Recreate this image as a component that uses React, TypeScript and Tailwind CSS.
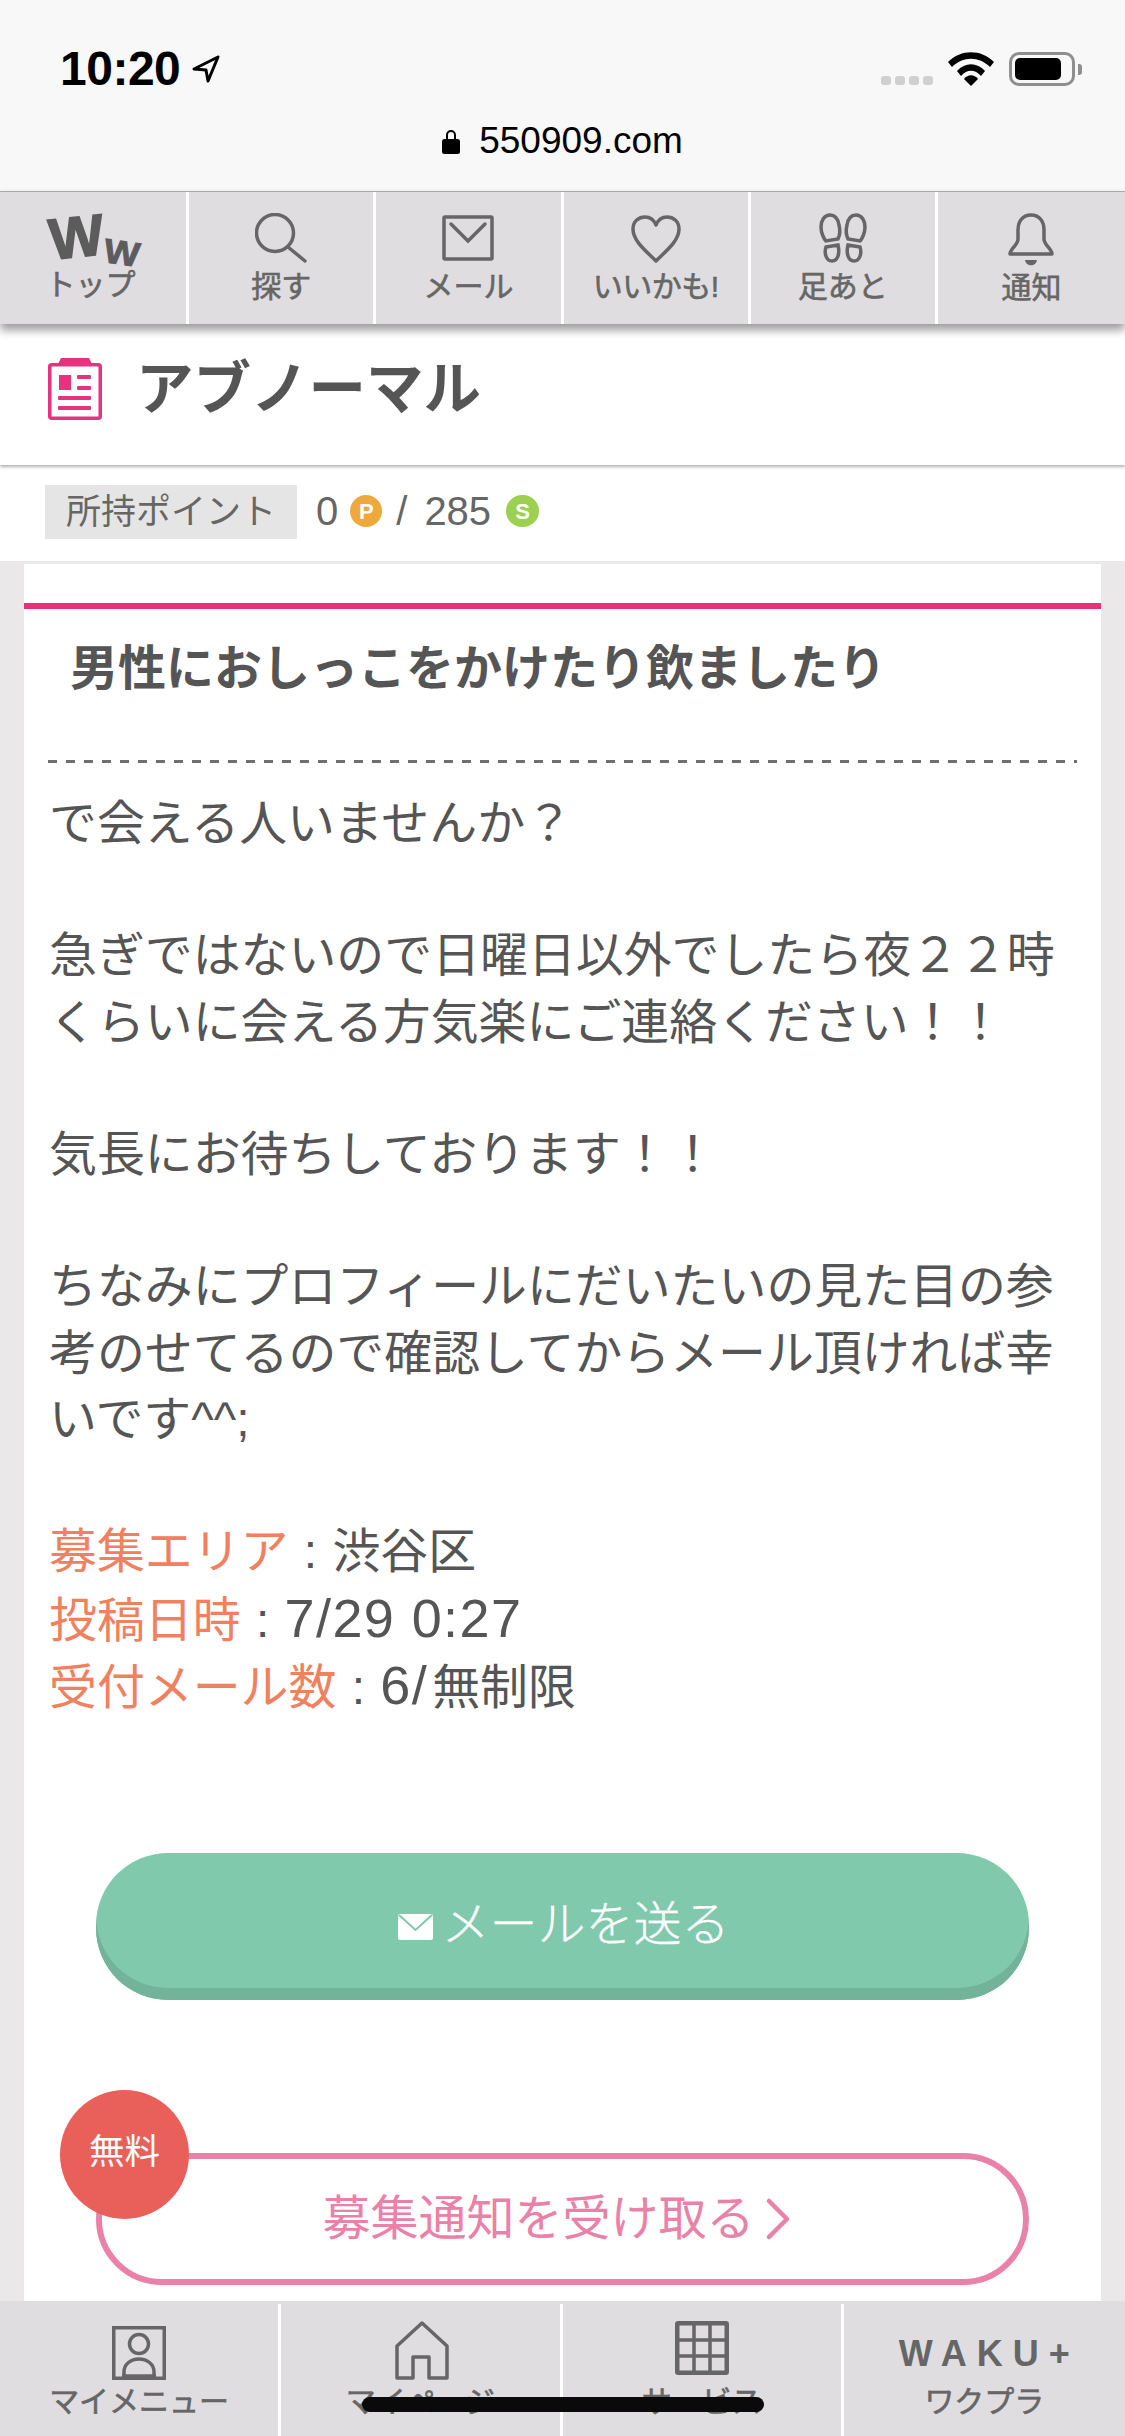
import React from "react";

const NavItem: React.FC<{ label: string; children: React.ReactNode; labelClass?: string }> = ({ label, children, labelClass }) => {
  return (
    <div className="flex flex-col items-center border-r-[3px] border-white last:border-r-0 pt-[21px]">
      <div className="h-[56px] flex items-start justify-center">{children}</div>
      <span className={`h-[36px] leading-[36px] text-[30px] [-webkit-text-stroke:0.6px_#666] text-[#666] whitespace-nowrap ${labelClass ?? ""}`}>{label}</span>
    </div>
  );
};

const BottomItem: React.FC<{ label: string; children: React.ReactNode; labelClass?: string }> = ({ label, children, labelClass }) => {
  return (
    <div className="flex flex-col items-center border-r-[3px] border-white last:border-r-0 pt-[17px]">
      <div className="h-[59px] flex items-start justify-center">{children}</div>
      <span className={`mt-[4px] h-[36px] leading-[36px] text-[30px] [-webkit-text-stroke:0.6px_#666] text-[#666] whitespace-nowrap ${labelClass ?? ""}`}>{label}</span>
    </div>
  );
};

const Sep: React.FC = () => <span className="inline-block w-[44px] text-center text-[#555]">:</span>;

const App: React.FC = () => {
  return (
    <div lang="ja" className="relative h-[2436px] w-[1125px] overflow-hidden flex flex-col bg-white font-['Liberation_Sans','Noto_Sans_CJK_JP',sans-serif] text-[#555]">
      {/* status bar + url */}
      <div className="h-[191px] shrink-0 bg-[#f8f8f8] flex flex-col text-black">
        <div className="flex justify-between items-start pl-[60px] pr-[43px] pt-[52px] h-[120px]">
          <div className="flex items-center gap-[11px] h-[34px]">
            <span className="text-[48px] leading-[34px] font-bold tracking-[-0.5px]">10:20</span>
            <svg width="30" height="30" viewBox="0 0 30 30" fill="none" stroke="#000" strokeWidth="3" strokeLinejoin="round">
              <path d="M27 3 L3 15 L15 16 L17 27 Z" />
            </svg>
          </div>
          <div className="flex items-center h-[34px]">
            <div className="flex gap-[4px] items-end self-end mb-[1px]">
              <span className="w-[10px] h-[9px] rounded-[3px] bg-[#d0d0d0]" />
              <span className="w-[10px] h-[9px] rounded-[3px] bg-[#d0d0d0]" />
              <span className="w-[10px] h-[9px] rounded-[3px] bg-[#d0d0d0]" />
              <span className="w-[10px] h-[9px] rounded-[3px] bg-[#d0d0d0]" />
            </div>
            <svg className="ml-[15px]" width="46" height="34" viewBox="0 0 46 34" fill="#000">
              <path d="M0 10 C13 -3 33 -3 46 10 L42 15 C31 4 15 4 4 15 Z" />
              <path d="M9 19 C17 10 29 10 37 19 L33 24 C27 17 19 17 13 24 Z" />
              <path d="M16 27 C20 22 26 22 30 27 L23 34 Z" />
            </svg>
            <div className="ml-[15px] w-[66px] h-[34px] rounded-[10px] border-[3px] border-[#8f8f8f] p-[3px]">
              <div className="w-[46px] h-[22px] rounded-[5px] bg-black" />
            </div>
            <div className="ml-[3px] w-[4px] h-[11px] rounded-r-[3px] bg-[#8f8f8f]" />
          </div>
        </div>
        <div className="flex items-center justify-center gap-[19px] mt-[-1px]">
          <svg width="18" height="26" viewBox="0 0 18 26" fill="#000">
            <path d="M4 11 V7 a5 5 0 0 1 10 0 V11 H12 V7 a3 3 0 0 0 -6 0 V11 Z" />
            <rect x="0" y="11" width="18" height="15" rx="2.5" />
          </svg>
          <span className="text-[37px] leading-[44px]">550909.com</span>
        </div>
      </div>

      {/* top nav */}
      <div className="relative z-10 shrink-0 h-[133px] grid grid-cols-6 pl-[2px] bg-[#dfdde0] border-t border-[#a9a7ab] shadow-[0_6px_9px_rgba(0,0,0,0.4)]">
        <NavItem label="トップ" labelClass="-mt-[2px] mr-[7px]">
          <div className="flex items-start h-[53px] text-[#5c5c5c] font-bold">
            <span className="text-[58px] leading-[44px] mt-[2px] -rotate-6 [-webkit-text-stroke:1.5px_#5c5c5c]">W</span>
            <span className="text-[38px] leading-[24px] mt-[28px] rotate-[8deg] scale-y-90 [-webkit-text-stroke:1px_#5c5c5c]">W</span>
          </div>
        </NavItem>
        <NavItem label="探す">
          <svg width="52" height="50" viewBox="0 0 52 50" fill="none" stroke="#666" strokeWidth="3.5" strokeLinecap="round">
            <circle cx="20" cy="20" r="18.5" />
            <path d="M33 34 L50 48" />
          </svg>
        </NavItem>
        <NavItem label="メール">
          <svg className="mt-[2px]" width="52" height="46" viewBox="0 0 52 46" fill="none" stroke="#666" strokeWidth="3.5">
            <rect x="2" y="2" width="48" height="42" rx="1" />
            <path d="M9 9 L26 26 L43 9" strokeLinecap="round" />
          </svg>
        </NavItem>
        <NavItem label="いいかも!" labelClass="tracking-[-0.5px]">
          <svg className="mt-[2px]" width="50" height="48" viewBox="0 0 50 48" fill="none" stroke="#666" strokeWidth="3.5" strokeLinejoin="round">
            <path d="M25 46 C15 36 2 26 2 14 C2 6 8 2 14 2 C19 2 23 5 25 10 C27 5 31 2 36 2 C42 2 48 6 48 14 C48 26 35 36 25 46 Z" />
          </svg>
        </NavItem>
        <NavItem label="足あと">
          <svg width="48" height="50" viewBox="0 0 48 50" fill="none" stroke="#666" strokeWidth="3.5">
            <path d="M11 2 C5 2 2 8 2 14 C2 20 5 26 7 28 L19 26 C21 22 21 16 20 12 C19 6 16 2 11 2 Z" />
            <path d="M37 2 C43 2 46 8 46 14 C46 20 43 26 41 28 L29 26 C27 22 27 16 28 12 C29 6 32 2 37 2 Z" />
            <path d="M7 34 L19 32 C21 40 19 48 13 48 C7 48 5 40 7 34 Z" />
            <path d="M41 34 L29 32 C27 40 29 48 35 48 C41 48 43 40 41 34 Z" />
          </svg>
        </NavItem>
        <NavItem label="通知" labelClass="mt-[1px]">
          <svg width="46" height="54" viewBox="0 0 46 54" fill="none" stroke="#666" strokeWidth="3.5" strokeLinejoin="round">
            <path d="M23 2 C14 2 10 9 10 17 V26 C10 32 2 36 2 41 H44 C44 36 36 32 36 26 V17 C36 9 32 2 23 2 Z" />
            <path d="M17 47 H29 C28 54 18 54 17 47 Z" fill="#666" stroke="none" />
          </svg>
        </NavItem>
      </div>

      {/* category header */}
      <div className="relative z-[5] shrink-0 h-[141px] flex items-start gap-[34px] pl-[48px] pt-[34px] bg-white shadow-[0_2px_3px_rgba(0,0,0,0.3)]">
        <svg width="54" height="62" viewBox="0 0 54 62" fill="#e8327f">
          <path d="M10 6 L13 0 H41 L44 6 Z" />
          <rect x="1.75" y="6.75" width="50.5" height="53.5" rx="2" fill="none" stroke="#e8327f" strokeWidth="3.5" />
          <rect x="11" y="17" width="12" height="15" />
          <rect x="29" y="17" width="14" height="4" rx="1" />
          <rect x="29" y="28" width="14" height="4" rx="1" />
          <rect x="10" y="38" width="33" height="4" rx="1" />
          <rect x="10" y="48" width="33" height="4" rx="1" />
        </svg>
        <h1 className="text-[57.5px] leading-[56px] font-bold text-[#555] mt-[3px]">アブノーマル</h1>
      </div>

      {/* points */}
      <div className="shrink-0 h-[96px] flex items-start pl-[45px] pt-[20px] bg-white text-[#666]">
        <div className="w-[252px] h-[54px] bg-[#e5e5e5] flex items-center justify-center text-[35px]">所持ポイント</div>
        <div className="flex items-center h-[54px] ml-[19px] mt-[-1px] text-[40px]">
          <span>0</span>
          <span className="ml-[12px] w-[32px] h-[32px] rounded-full bg-[#efa83c] text-white text-[22px] font-bold flex items-center justify-center">P</span>
          <span className="ml-[14px]">/</span>
          <span className="ml-[17px]">285</span>
          <span className="ml-[15px] w-[33px] h-[32px] rounded-full bg-[#9bd050] text-white text-[22px] font-bold flex items-center justify-center">S</span>
        </div>
      </div>

      {/* content */}
      <div className="flex-1 min-h-0 overflow-hidden bg-[#eae8e9] pt-[3px] px-[24px]">
        <div className="bg-white pt-[39px] h-full">
          <div className="h-[6px] bg-[#e63279]" />
          <h2 className="mt-[27px] ml-[46px] text-[48px] leading-[66px] font-bold text-[#555] whitespace-nowrap">男性におしっこをかけたり飲ましたり</h2>
          <div className="mt-[58px] mx-[24px] h-[3px] bg-[repeating-linear-gradient(90deg,#6e6e73_0_9px,transparent_9px_18px)]" />
          <div className="mt-[28px] ml-[25px] text-[47.9px] leading-[66.2px] text-[#555] whitespace-nowrap">
            <p>で会える人いませんか？</p>
            <p className="mt-[66.2px]">急ぎではないので日曜日以外でしたら夜２２時</p>
            <p>くらいに会える方気楽にご連絡ください！！</p>
            <p className="mt-[66.2px]">気長にお待ちしております！！</p>
            <p className="mt-[66.2px]">ちなみにプロフィールにだいたいの見た目の参</p>
            <p>考のせてるので確認してからメール頂ければ幸</p>
            <p>いです^^;</p>
            <p className="mt-[66.2px] h-[66.2px]"><span className="text-[#ef8161]">募集エリア</span><Sep />渋谷区</p>
            <p className="h-[66.2px]"><span className="text-[#ef8161]">投稿日時</span><Sep /><span className="text-[54px] tracking-[1.4px]">7/29 0:27</span></p>
            <p className="h-[66.2px]"><span className="text-[#ef8161]">受付メール数</span><Sep /><span className="text-[54px] tracking-[1.4px] mr-[4px]">6/</span>無制限</p>
          </div>

          <div className="mt-[135.4px] ml-[72px] w-[933px] h-[147px] rounded-[72px] bg-[#80c9ac] shadow-[inset_0_-12px_0_#72b39a] flex items-center justify-center pb-[3px] pl-[3px] gap-[8px] text-white text-[48px] font-light [-webkit-text-stroke:0.3px_#fff]">
            <svg width="35" height="26" viewBox="0 0 35 26" className="mt-[4px]">
              <rect width="35" height="26" rx="2" fill="#fff" />
              <path d="M1 1 L17.5 16 L34 1" fill="none" stroke="#80c9ac" strokeWidth="2" />
            </svg>
            <span>メールを送る</span>
          </div>

          <div className="relative mt-[153px] ml-[72px] w-[933px] h-[132px] rounded-[66px] border-[6px] border-[#e981a8] flex items-center justify-center gap-[10px] pr-[12px] text-[#e981a8] text-[48px]">
            <span>募集通知を受け取る</span>
            <svg width="26" height="44" viewBox="0 0 26 44" fill="none" stroke="#e981a8" strokeWidth="4.5" strokeLinecap="round" strokeLinejoin="round">
              <path d="M4 4 L22 22 L4 40" />
            </svg>
            <div className="absolute left-[-42px] top-[-69px] w-[129px] h-[129px] rounded-full bg-[#e9605a] flex items-center justify-center pb-[5px] text-white text-[35.5px]">無料</div>
          </div>
        </div>
      </div>

      {/* bottom nav */}
      <div className="shrink-0 h-[135px] grid grid-cols-4 bg-[#dfdde0] pt-[3px]">
        <BottomItem label="マイメニュー">
          <svg className="mt-[5px]" width="54" height="54" viewBox="0 0 54 54" fill="none" stroke="#666" strokeWidth="3.5">
            <rect x="1.75" y="1.75" width="50.5" height="50.5" />
            <circle cx="27" cy="18" r="9.5" />
            <path d="M12 52 V46 C12 38 19 33 27 33 C35 33 42 38 42 46 V52" />
            <path d="M10 50 H44" />
          </svg>
        </BottomItem>
        <BottomItem label="マイページ">
          <svg className="ml-[3px]" width="54" height="59" viewBox="0 0 54 59" fill="none" stroke="#666" strokeWidth="3.5" strokeLinejoin="round" strokeLinecap="round">
            <path d="M2 57 V25 L27 2 L52 25 V57 H40 M2 57 H18 V36 H34 V57 H40" />
          </svg>
        </BottomItem>
        <BottomItem label="サービス">
          <svg width="54" height="54" viewBox="0 0 54 54" fill="none" stroke="#666" strokeWidth="3.5">
            <rect x="2.25" y="2.25" width="49.5" height="49.5" strokeWidth="4.5" rx="1" />
            <path d="M19 2 V52 M35 2 V52 M2 19 H52 M2 35 H52" />
          </svg>
        </BottomItem>
        <BottomItem label="ワクプラ" labelClass="text-[29px]">
          <span className="mt-[16px] text-[36px] leading-[34px] font-bold tracking-[10px] mr-[-10px] text-[#666]">WAKU+</span>
        </BottomItem>
      </div>

      {/* iOS home indicator */}
      <div className="absolute left-[362px] top-[2397px] w-[402px] h-[15px] rounded-full bg-[#0a0a0a]" />
    </div>
  );
};

export default App;
